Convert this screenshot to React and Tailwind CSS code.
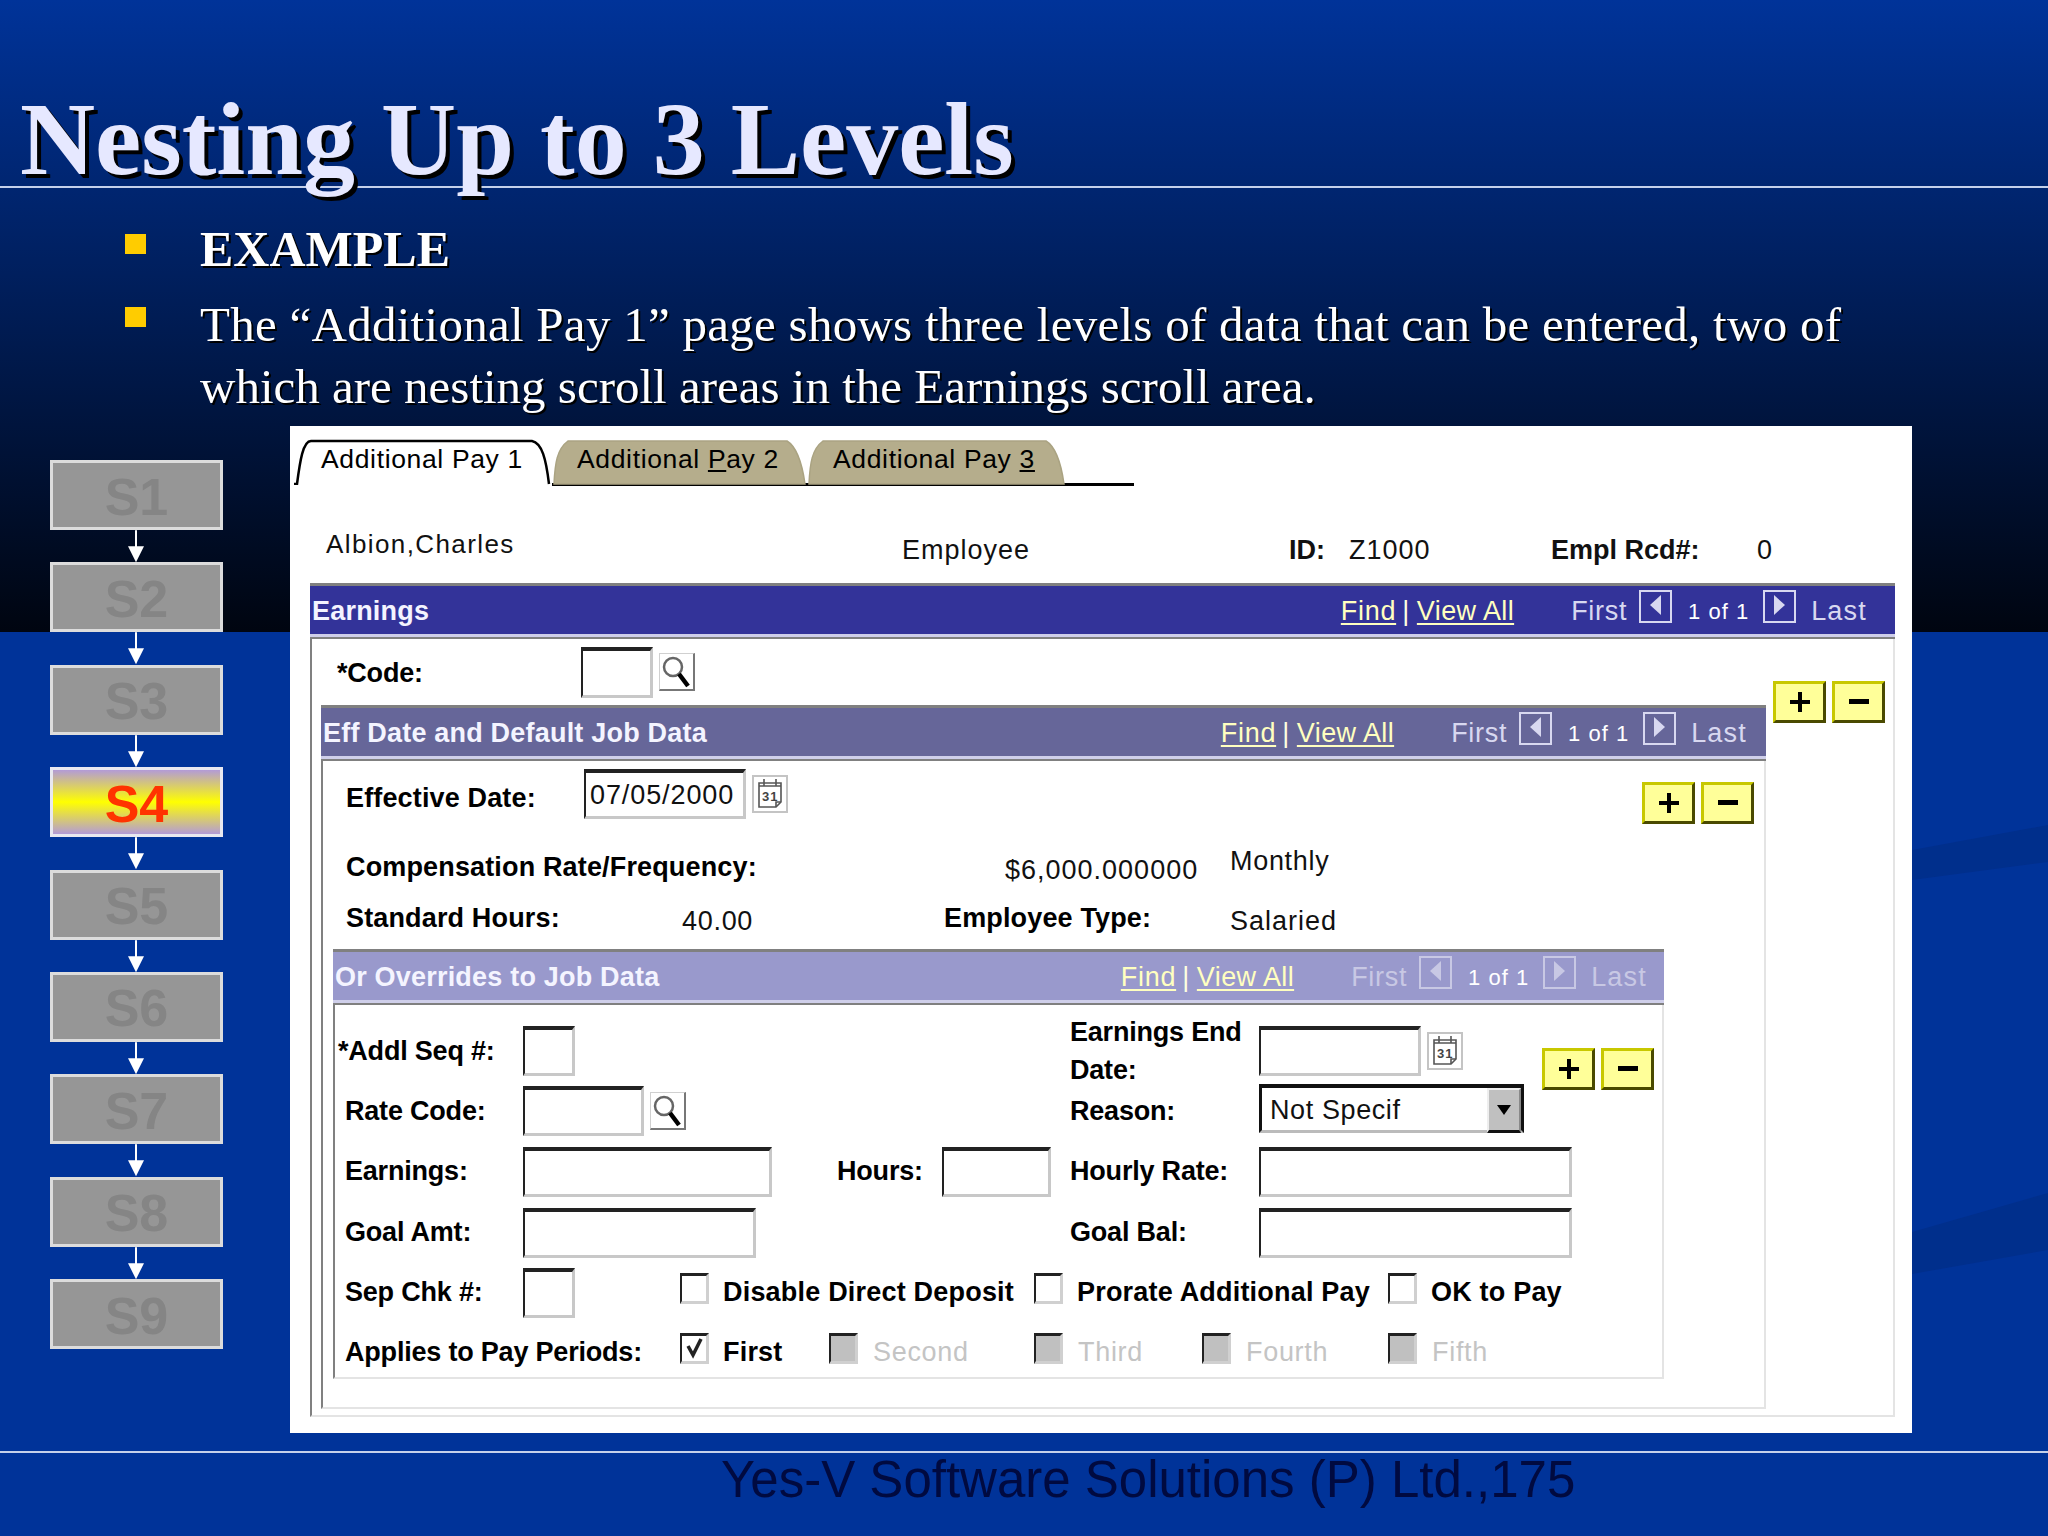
import React from 'react'

const steps = ['S1', 'S2', 'S3', 'S4', 'S5', 'S6', 'S7', 'S8', 'S9']

function Step({ label, active }) {
  if (active) {
    return (
      <div className="flex h-[70px] items-center justify-center border-[3px] border-[#e8e8f0] bg-[linear-gradient(to_bottom,#b39bd6,#ffff00_50%,#b39bd6)] pt-[3px] text-[52px] font-bold text-[#ff3300]">
        {label}
      </div>
    )
  }
  return (
    <div className="flex h-[70px] items-center justify-center border-[3px] border-[#dcdcdc] bg-[#969696] pt-[3px] text-[52px] font-bold text-[#858585]">
      {label}
    </div>
  )
}

function Arrow() {
  return (
    <svg width="172" height="32.4" viewBox="0 0 172 32" className="block">
      <rect x="85" y="0" width="2" height="17" fill="#fff" />
      <polygon points="78,16 94,16 86,32" fill="#fff" />
    </svg>
  )
}

function Sidebar() {
  return (
    <div className="mt-[34px] ml-[50px] w-[173px] shrink-0">
      {steps.map((s, i) => (
        <div key={s}>
          <Step label={s} active={s === 'S4'} />
          {i < steps.length - 1 && <Arrow />}
        </div>
      ))}
    </div>
  )
}

function Tab({ active, width, textLeft, children }) {
  return (
    <div className="relative h-[44px] shrink-0" style={{ width }}>
      <svg className="absolute inset-0" width={width} height="46" viewBox={`0 0 ${width} 46`}>
        {active ? (
          <path d={`M1 45 H4 C7 22 10 2 18 2 H${width - 20} C${width - 10} 4 ${width - 6} 20 ${width - 3} 45`} fill="#fff" stroke="#000" strokeWidth="2.5" />
        ) : (
          <path d={`M2 45 C3 24 5 10 16 2 H${width - 20} C${width - 10} 8 ${width - 5} 24 ${width - 2} 45 Z`} fill="#b5ad8c" stroke="#aaa382" strokeWidth="1.5" />
        )}
      </svg>
      <span className="absolute top-[5px] text-[26.5px] leading-[30px] tracking-[0.65px] whitespace-nowrap text-black" style={{ left: textLeft }}>
        {children}
      </span>
    </div>
  )
}

function NavBox({ dir, color }) {
  return (
    <span className="block h-[33px] w-[33px] -translate-y-[5px] border-2" style={{ borderColor: color }}>
      <svg width="29" height="29" viewBox="0 0 29 29">
        <polygon points={dir === 'left' ? '20,3 20,23 9,13' : '9,3 9,23 20,13'} fill={color} />
      </svg>
    </span>
  )
}

function Bar({ title, bg, pad, muted }) {
  const nav = muted ? '#c8c8e4' : '#d8d8f0'
  return (
    <div className="-mx-[2px] mb-[2px] border-t-[3px] border-b-[3px] border-t-[#808080] border-b-[#cfcfea] shadow-[0_2px_0_#808080]" style={{ background: bg, paddingRight: pad }}>
      <div className="flex h-[48px] items-center pt-[2px] text-[27px] tracking-[0.7px] whitespace-nowrap text-white">
        <span className="pl-[2px] font-bold tracking-[0.2px] text-[#f4f4ff]">{title}</span>
        <div className="ml-auto flex items-center">
          <span className="text-[#ffffc0] underline underline-offset-3">Find</span>
          <span className="ml-[6px] text-[#ffffe0]">|</span>
          <span className="ml-[7px] tracking-[0.4px] text-[#ffffc0] underline underline-offset-3">View All</span>
          <span className="ml-[57px]" style={{ color: nav }}>First</span>
          <span className="ml-[12px]"><NavBox dir="left" color={nav} /></span>
          <span className="ml-[16px] text-[22px] tracking-[1px] text-white">1 of 1</span>
          <span className="ml-[14px]"><NavBox dir="right" color={nav} /></span>
          <span className="ml-[15px] tracking-[1.2px]" style={{ color: nav }}>Last</span>
        </div>
      </div>
    </div>
  )
}

function Input({ w, h = 50, children }) {
  return (
    <div className="box-border shrink-0 overflow-hidden border-t-[4px] border-r-[3px] border-b-[3px] border-l-[2px] border-t-[#222] border-r-[#c8c8c8] border-b-[#c8c8c8] border-l-[#222] bg-white pl-[4px] text-[27px] leading-[44px] whitespace-nowrap" style={{ width: w, height: h }}>
      {children}
    </div>
  )
}

function Search() {
  return (
    <div className="ml-[6px] h-[38px] w-[36px] shrink-0 border border-r-2 border-b-2 border-t-[#d0d0d0] border-r-[#777] border-b-[#777] border-l-[#d0d0d0] bg-white">
      <svg width="33" height="35" viewBox="0 0 33 35">
        <circle cx="13" cy="13" r="9" fill="#fff" stroke="#666" strokeWidth="2.5" />
        <line x1="19" y1="20" x2="28" y2="32" stroke="#000" strokeWidth="4.5" />
      </svg>
    </div>
  )
}

function Calendar() {
  return (
    <div className="ml-[6px] h-[38px] w-[36px] shrink-0 border-2 border-[#c4c4c4] bg-white">
      <svg width="32" height="34" viewBox="0 0 32 34">
        <path d="M5 6 H27 V25 L22 30 H5 Z" fill="none" stroke="#555" strokeWidth="1.6" />
        <path d="M10 2 V9 M22 2 V9 M5 9 H27 M22 30 V25 H27" fill="none" stroke="#555" strokeWidth="1.6" />
        <text x="8" y="24" fontSize="13" fontWeight="700" fill="#444" fontFamily="Liberation Sans, sans-serif">31</text>
      </svg>
    </div>
  )
}

function PlusMinus({ className = '' }) {
  const btn = 'flex h-[42px] w-[53px] items-center justify-center border-[3px] border-t-[#c8c800] border-r-[#4a4a00] border-b-[#4a4a00] border-l-[#c8c800] bg-[#ffff99]'
  return (
    <div className={`flex gap-[6px] ${className}`}>
      <div className={btn}>
        <svg width="20" height="20" viewBox="0 0 20 20"><path d="M8 0 H12 V8 H20 V12 H12 V20 H8 V12 H0 V8 H8 Z" fill="#000" /></svg>
      </div>
      <div className={btn}>
        <svg width="20" height="6" viewBox="0 0 20 6"><rect width="20" height="5" fill="#000" /></svg>
      </div>
    </div>
  )
}

function Check({ checked, disabled, label, width }) {
  return (
    <div className="flex shrink-0 items-center" style={{ width }}>
      <div className={`box-border h-[31px] w-[29px] shrink-0 -translate-y-[4px] border-t-[3px] border-r-[3px] border-b-[3px] border-l-[2px] border-t-[#222] border-r-[#d0d0d0] border-b-[#d0d0d0] border-l-[#222] ${disabled ? 'bg-[#c0c0c0]' : 'bg-white'}`}>
        {checked && (
          <svg width="24" height="25" viewBox="0 0 24 25">
            <path d="M6 10 L11 19 L19 3" fill="none" stroke="#222" strokeWidth="3.5" />
          </svg>
        )}
      </div>
      <span className={`whitespace-nowrap text-[27px] ${disabled ? 'ml-[15px] tracking-[0.7px] text-[#c4c4c4]' : 'ml-[14px] font-semibold tracking-[0.2px] text-black'}`}>{label}</span>
    </div>
  )
}

function Label({ children, className = '' }) {
  return <span className={`text-[27px] font-bold tracking-[-0.2px] whitespace-nowrap text-black ${className}`}>{children}</span>
}

function OverridesForm() {
  return (
    <div className="grid grid-cols-[178px_314px_105px_128px_189px_283px_1fr] grid-rows-[60px_60px_61px_61px] items-center pt-[16px] pl-[10px]">
      <Label className="-ml-[7px]">*Addl Seq #:</Label>
      <Input w={52} />
      <span className="col-span-2" />
      <Label className="leading-[38px] whitespace-normal">Earnings End<br />Date:</Label>
      <div className="flex items-center"><Input w={162} /><Calendar /></div>
      <PlusMinus className="row-span-2 mt-[27px] self-start" />

      <Label>Rate Code:</Label>
      <div className="flex items-center"><Input w={121} /><Search /></div>
      <span className="col-span-2" />
      <Label>Reason:</Label>
      <div className="relative box-border h-[49px] w-[265px] -translate-y-[3px] border-t-[4px] border-r-[3px] border-b-[3px] border-l-[3px] border-t-[#111] border-r-[#111] border-b-[#bbb] border-l-[#111] bg-white pl-[8px] text-[27px] leading-[44px] tracking-[0.6px] whitespace-nowrap">
        Not Specif
        <div className="absolute top-0 right-0 bottom-[-3px] flex w-[34px] items-center justify-center border-2 border-b-[3px] border-t-[#eee] border-r-[#888] border-b-[#111] border-l-[#eee] bg-[#c0c0c0]">
          <svg width="16" height="12" viewBox="0 0 16 12"><polygon points="1,1 15,1 8,11" fill="#000" /></svg>
        </div>
      </div>

      <Label>Earnings:</Label>
      <Input w={249} />
      <Label>Hours:</Label>
      <Input w={109} />
      <Label>Hourly Rate:</Label>
      <div className="col-span-2"><Input w={313} /></div>

      <Label>Goal Amt:</Label>
      <Input w={233} />
      <span className="col-span-2" />
      <Label>Goal Bal:</Label>
      <div className="col-span-2"><Input w={313} /></div>
    </div>
  )
}

function CheckRows() {
  return (
    <div className="pl-[10px]">
      <div className="flex h-[59px] items-center">
        <Label className="w-[178px] shrink-0">Sep Chk #:</Label>
        <div className="w-[157px] shrink-0"><Input w={52} /></div>
        <Check width={354} label="Disable Direct Deposit" />
        <Check width={354} label="Prorate Additional Pay" />
        <Check width={180} label="OK to Pay" />
      </div>
      <div className="mt-[6px] flex h-[48px] items-center">
        <Label className="w-[335px] shrink-0">Applies to Pay Periods:</Label>
        <Check width={149} checked label="First" />
        <Check width={205} disabled label="Second" />
        <Check width={168} disabled label="Third" />
        <Check width={186} disabled label="Fourth" />
        <Check width={120} disabled label="Fifth" />
      </div>
    </div>
  )
}

function Panel() {
  return (
    <div className="ml-[67px] h-[1007px] w-[1622px] shrink-0 bg-white text-[27px] tracking-[1px] text-[#111]">
      <div className="flex items-start pt-[13px] pl-[3px]">
        <Tab active width={259} textLeft={28}>Additional Pay 1</Tab>
        <div className="flex w-[582px] border-b-[3px] border-black">
          <Tab width={255} textLeft={25}>Additional <u>P</u>ay 2</Tab>
          <Tab width={259} textLeft={26}>Additional Pay <u>3</u></Tab>
        </div>
      </div>

      <div className="flex h-[97px] items-center pt-[31px] pl-[36px] whitespace-nowrap">
        <span className="-mt-[12px] w-[576px] text-[26px] tracking-[1.4px]">Albion,Charles</span>
        <span className="w-[387px]">Employee</span>
        <span className="w-[60px] font-bold tracking-normal">ID:</span>
        <span className="w-[202px]">Z1000</span>
        <span className="w-[206px] font-bold tracking-normal">Empl Rcd#:</span>
        <span>0</span>
      </div>

      <section className="ml-[20px] h-[834px] w-[1585px] border-r-2 border-b-2 border-l-2 border-r-[#e4e4e4] border-b-[#e4e4e4] border-l-[#808080]">
        <Bar title="Earnings" bg="#333399" pad={28} />
        <div className="flex">
          <div className="w-[1456px] shrink-0 pl-[9px]">
            <div className="flex h-[66px] items-center pl-[16px]">
              <Label className="w-[244px] shrink-0 pt-[3px]">*Code:</Label>
              <Input w={72} h={51} />
              <Search />
            </div>

            <section className="h-[704px] w-[1445px] border-r-2 border-b-2 border-l-2 border-r-[#e4e4e4] border-b-[#e4e4e4] border-l-[#808080]">
              <Bar title="Eff Date and Default Job Data" bg="#666699" pad={19} />
              <div className="flex h-[79px] items-start pt-[8px] pl-[23px]">
                <Label className="mt-[9px] w-[238px] shrink-0 tracking-[0.15px]">Effective Date:</Label>
                <Input w={162}><span className="tracking-[0.9px]">07/05/2000</span></Input>
                <div className="mt-[6px]"><Calendar /></div>
                <PlusMinus className="mt-[13px] ml-auto pr-[10px]" />
              </div>
              <div className="flex h-[54px] items-center pl-[23px]">
                <Label className="w-[659px] shrink-0 tracking-[0.15px]">Compensation Rate/Frequency:</Label>
                <span className="w-[225px] pt-[6px]">$6,000.000000</span>
                <span className="-mt-[12px] tracking-[0.7px]">Monthly</span>
              </div>
              <div className="flex h-[48px] items-center pl-[23px]">
                <Label className="w-[336px] shrink-0 tracking-[0.15px]">Standard Hours:</Label>
                <span className="w-[262px] pt-[6px] tracking-[0.7px]">40.00</span>
                <Label className="w-[286px] shrink-0 tracking-[0.15px]">Employee Type:</Label>
                <span className="pt-[6px]">Salaried</span>
              </div>

              <section className="mt-[7px] ml-[10px] h-[430px] w-[1331px] border-r-2 border-b-2 border-l-2 border-r-[#e4e4e4] border-b-[#e4e4e4] border-l-[#808080]">
                <Bar title="Or Overrides to Job Data" bg="#9999cc" pad={17} muted />
                <OverridesForm />
                <CheckRows />
              </section>
            </section>
          </div>
          <PlusMinus className="mt-[42px] ml-[5px] h-[42px]" />
        </div>
      </section>
    </div>
  )
}

export default function App() {
  return (
    <div className="relative h-[1536px] w-[2048px] overflow-hidden bg-[linear-gradient(to_bottom,#003399_0px,#000510_632px,#003399_632px)] [font-family:'Liberation_Sans',sans-serif]">
      <svg className="absolute inset-0" width="2048" height="1536" viewBox="0 0 2048 1536">
        <polygon points="1912,850 2048,825 2048,862 1912,880" fill="#002f8c" />
        <polygon points="1912,1232 2048,1193 2048,1250 1912,1274" fill="#002f8c" />
      </svg>

      <div className="relative flex h-[1536px] flex-col">
        <header className="h-[188px] shrink-0 border-b-2 border-[#c4d0ea] pt-[84px] pl-[20px] [font-family:'Liberation_Serif',serif]">
          <h1 className="text-[104px] leading-[110px] font-bold whitespace-nowrap text-[#e6e8ff] [text-shadow:4px_4px_0_#000]">
            Nesting Up to 3 Levels
          </h1>
        </header>

        <ul className="h-[238px] shrink-0 pt-[33px] pl-[125px] text-white [font-family:'Liberation_Serif',serif]">
          <li className="flex items-start">
            <span className="mt-[13px] h-[20px] w-[21px] shrink-0 bg-[#ffcc00]" />
            <span className="ml-[54px] text-[50px] leading-[56px] font-bold [text-shadow:2px_2px_0_#000]">EXAMPLE</span>
          </li>
          <li className="mt-[17px] flex items-start">
            <span className="mt-[13px] h-[20px] w-[21px] shrink-0 bg-[#ffcc00]" />
            <span className="ml-[54px] text-[49px] leading-[62px] whitespace-nowrap [text-shadow:2px_2px_0_#000]">
              <span className="block tracking-[0.27px]">The “Additional Pay 1” page shows three levels of data that can be entered, two of</span>
              <span className="block">which are nesting scroll areas in the Earnings scroll area.</span>
            </span>
          </li>
        </ul>

        <div className="flex">
          <Sidebar />
          <Panel />
        </div>

        <footer className="mt-[18px] h-[80px] border-t-2 border-[#c4d0ea] pl-[721px]">
          <span className="text-[51px] leading-[54px] whitespace-nowrap text-[#000a40]">Yes-V Software Solutions (P) Ltd.,175</span>
        </footer>
      </div>
    </div>
  )
}
